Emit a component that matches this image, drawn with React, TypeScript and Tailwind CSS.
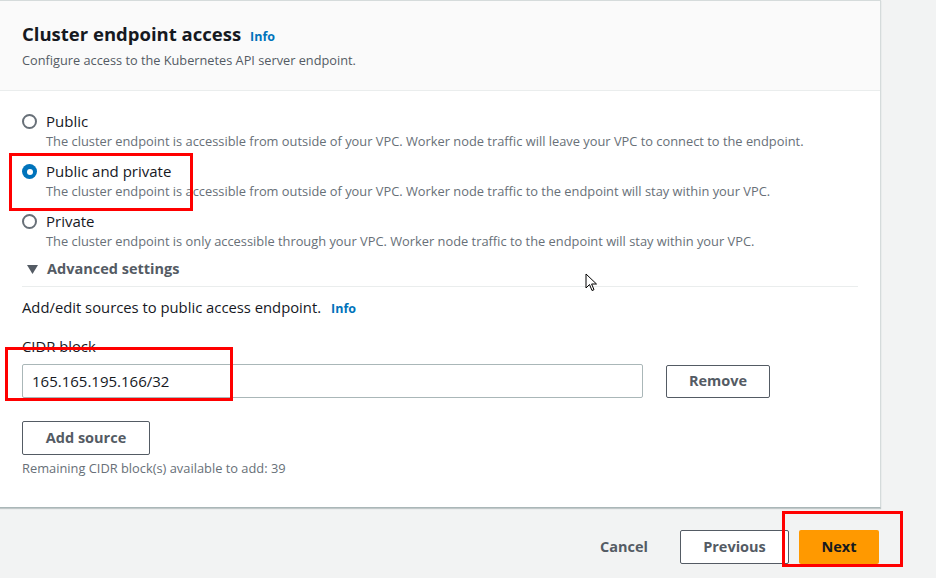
const options = [
  {
    label: 'Public',
    desc: 'The cluster endpoint is accessible from outside of your VPC. Worker node traffic will leave your VPC to connect to the endpoint.',
    checked: false,
  },
  {
    label: 'Public and private',
    desc: 'The cluster endpoint is accessible from outside of your VPC. Worker node traffic to the endpoint will stay within your VPC.',
    checked: true,
  },
  {
    label: 'Private',
    desc: 'The cluster endpoint is only accessible through your VPC. Worker node traffic to the endpoint will stay within your VPC.',
    checked: false,
  },
];

function Radio({ checked }: { checked: boolean }) {
  if (checked) {
    return (
      <span className="w-[15px] h-[15px] rounded-full bg-[#0073bb] flex items-center justify-center shrink-0">
        <span className="block w-[6px] h-[6px] rounded-full bg-white" />
      </span>
    );
  }
  return <span className="block w-[15px] h-[15px] rounded-full border-2 border-[#687078] bg-white shrink-0" />;
}

export default function App() {
  return (
    <div
      className="relative w-[936px] h-[578px] bg-[#f2f3f3] overflow-hidden"
      style={{ fontFamily: '"Open Sans", "Noto Sans", Arial, sans-serif' }}
    >
      <div className="w-[882px] ml-[-1px] bg-white border border-[#d5dbdb] border-b-[#aab7b8] shadow-[0_1px_1px_rgba(0,28,36,0.2)]">
        <div className="bg-[#fafafa] h-[90px] px-[22px] pt-[20px] border-b border-[#eaeded]">
          <div className="flex items-baseline gap-[9px]">
            <h2 className="text-[18.5px] leading-[26px] font-bold text-[#16191f]">Cluster endpoint access</h2>
            <span className="text-[12.5px] font-bold text-[#0073bb]">Info</span>
          </div>
          <p className="text-[12.75px] leading-[16px] mt-[5px] text-[#545b64]">
            Configure access to the Kubernetes API server endpoint.
          </p>
        </div>

        <div className="px-[22px] pt-[20px] pb-[31px]">
          <div className="flex flex-col gap-[10px]">
            {options.map((o) => (
              <div key={o.label} className="flex gap-[9px]">
                <div className="pt-[3px]">
                  <Radio checked={o.checked} />
                </div>
                <div>
                  <div className="text-[15px] leading-[20px] text-[#16191f]">{o.label}</div>
                  <div className="text-[12.85px] leading-[20px] text-[#687078]">{o.desc}</div>
                </div>
              </div>
            ))}
          </div>

          <div className="border-b border-[#eaeded] pt-[8px] pb-[7px]">
            <div className="flex items-center gap-[9px] pl-[5px]">
              <svg width="11" height="9" viewBox="0 0 11 9">
                <polygon points="0,0 11,0 5.5,9" fill="#545b64" />
              </svg>
              <span className="text-[14.5px] leading-[20px] font-bold text-[#545b64]">Advanced settings</span>
            </div>
          </div>

          <div className="flex items-baseline gap-[10px] mt-[10px] h-[20px] leading-[20px]">
            <span className="text-[14.8px] leading-[20px] text-[#16191f]">Add/edit sources to public access endpoint.</span>
            <span className="text-[12.5px] leading-[20px] font-bold text-[#0073bb]">Info</span>
          </div>

          <div className="text-[14.8px] leading-[20px] text-[#16191f] mt-[19px]">CIDR block</div>
          <div className="flex items-center gap-[23px] mt-[8px]">
            <div className="w-[621px] h-[34px] border border-[#aab7b8] rounded-[2px] px-[9px] flex items-center text-[15px] text-[#16191f]">
              165.165.195.166/32
            </div>
            <button className="w-[104px] h-[33px] border border-[#545b64] rounded-[2px] text-[14.5px] font-bold text-[#545b64] bg-white">
              Remove
            </button>
          </div>

          <button className="block mt-[23px] w-[128px] h-[34px] border border-[#545b64] rounded-[2px] text-[14.5px] font-bold text-[#545b64] bg-white">
            Add source
          </button>
          <p className="mt-[5px] text-[12.85px] leading-[16px] text-[#687078]">Remaining CIDR block(s) available to add: 39</p>
        </div>
      </div>

      <div className="flex items-center justify-end pr-[57px] mt-[22px]">
        <button className="text-[14.5px] font-bold text-[#545b64] mr-[32px]">Cancel</button>
        <button className="w-[109px] h-[34px] border border-[#545b64] rounded-[2px] bg-white text-[14.5px] font-bold text-[#545b64] mr-[10px]">
          Previous
        </button>
        <button className="w-[80px] h-[34px] rounded-[2px] bg-[#ff9900] text-[14.5px] font-bold text-[#16191f]">Next</button>
      </div>

      {/* annotation boxes */}
      <div className="absolute left-[9px] top-[153px] w-[184px] h-[58px] border-[3px] border-[#ff0000]" />
      <div className="absolute left-[5px] top-[347px] w-[228px] h-[54px] border-[3px] border-[#ff0000]" />
      <div className="absolute left-[782px] top-[511px] w-[121px] h-[56px] border-[3px] border-[#ff0000]" />

      {/* mouse cursor */}
      <svg className="absolute left-[585px] top-[273px]" width="13" height="20" viewBox="0 0 13 20">
        <path d="M1 1 L1 15 L4.5 11.5 L7 17.5 L9 16.7 L6.6 11 L11.5 11 Z" fill="white" stroke="#000" strokeWidth="1" strokeLinejoin="round" />
      </svg>
    </div>
  );
}
